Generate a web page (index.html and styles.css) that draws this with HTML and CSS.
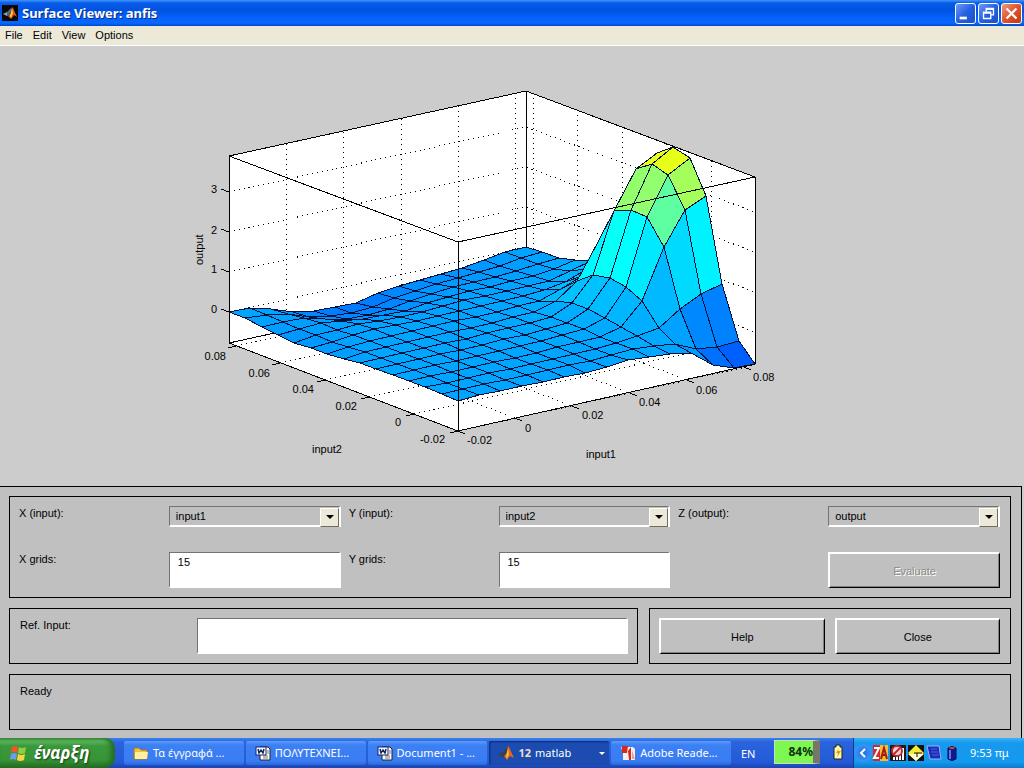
FILE: index.html
```html
<!DOCTYPE html>
<html lang="en">
<head>
  <meta charset="utf-8">
  <title>Surface Viewer: anfis</title>
  <link rel="stylesheet" href="styles.css">
</head>
<body>

  <header class="titlebar">
    <svg class="app-icon" viewBox="0 0 16 16">
      <rect width="16" height="16" fill="#0a0806"/>
      <path d="M1 9l4-2 2 2-2 2z" fill="#7fa8c0"/>
      <path d="M5 7l4-4 1 2-3 5-2 1z" fill="#4a6a86"/>
      <path d="M10 2l1 1 4 9-3-2-3 4-3-3 3-3z" fill="#e2581a"/>
      <path d="M10 3l1 5-2 5-1-2z" fill="#ffc640"/>
    </svg>
    <h1>Surface Viewer: anfis</h1>
    <div class="window-buttons">
      <button aria-label="Minimize"><svg viewBox="0 0 21 21"><path d="M4 14h8v3H4z" fill="#fff"/></svg></button>
      <button aria-label="Restore"><svg viewBox="0 0 21 21"><path d="M8 8V5h8v7h-3M5 9h8v7H5zM5 10h8M8 6h8" fill="none" stroke="#fff" stroke-width="1.5"/></svg></button>
      <button class="close" aria-label="Close window"><svg viewBox="0 0 21 21"><path d="M5 5l11 11M16 5L5 16" stroke="#fff" stroke-width="2.5"/></svg></button>
    </div>
  </header>

  <nav class="menubar">
    <a href="#">File</a>
    <a href="#">Edit</a>
    <a href="#">View</a>
    <a href="#">Options</a>
  </nav>

  <main class="figure">
    <svg id="plot" viewBox="0 46 1024 440" role="img" aria-label="Surface plot of output">
      <polygon points="229,156 526,91 755,177 755,364 458,431 229,343" fill="#fff"/>
      <g id="grid" class="grid-lines"></g>
      <path class="axis" d="M229 156L526 91L755 177V364M526 91V278M229 343L526 278L755 364"/>
      <g id="surface" class="surface"></g>
      <path class="axis" d="M229 156V343L458 431L755 364M229 156L458 242L755 177M458 242V431"/>
      <path id="ticks" class="axis"/>
      <g class="tick-text end">
        <text x="217" y="193">3</text>
        <text x="217" y="234">2</text>
        <text x="217" y="273">1</text>
        <text x="217" y="313">0</text>
        <text x="226" y="360">0.08</text>
        <text x="270" y="377">0.06</text>
        <text x="314" y="393">0.04</text>
        <text x="357" y="410">0.02</text>
        <text x="401" y="426">0</text>
        <text x="445" y="443">-0.02</text>
      </g>
      <g class="tick-text">
        <text x="467" y="444">-0.02</text>
        <text x="525" y="432">0</text>
        <text x="582" y="419">0.02</text>
        <text x="639" y="406">0.04</text>
        <text x="696" y="394">0.06</text>
        <text x="753" y="381">0.08</text>
        <text x="312" y="453">input2</text>
        <text x="586" y="458">input1</text>
        <text transform="translate(203 265) rotate(-90)">output</text>
      </g>
    </svg>
  </main>

  <form class="controls" onsubmit="return false">
    <fieldset class="box inputs">
      <div class="pair">
        <label for="x-input">X (input):</label>
        <span class="dropdown"><select id="x-input"><option>input1</option><option>input2</option></select></span>
      </div>
      <div class="pair">
        <label for="y-input">Y (input):</label>
        <span class="dropdown"><select id="y-input"><option>input2</option><option>input1</option></select></span>
      </div>
      <div class="pair">
        <label for="z-output">Z (output):</label>
        <span class="dropdown"><select id="z-output"><option>output</option></select></span>
      </div>
      <div class="pair">
        <label for="x-grids">X grids:</label>
        <textarea id="x-grids">15</textarea>
      </div>
      <div class="pair">
        <label for="y-grids">Y grids:</label>
        <textarea id="y-grids">15</textarea>
      </div>
      <div class="pair">
        <button class="push last" disabled>Evaluate</button>
      </div>
    </fieldset>
    <div class="row">
      <div class="box ref">
        <label for="ref-input">Ref. Input:</label>
        <input id="ref-input" type="text">
      </div>
      <div class="box actions">
        <button class="push">Help</button>
        <button class="push">Close</button>
      </div>
    </div>
    <div class="box status">Ready</div>
  </form>

  <footer class="taskbar">
    <button class="start">
      <svg viewBox="0 0 18 18">
        <path d="M2 3q3-2 6 0l-1 6q-3-2-6 0z" fill="#f0562a"/>
        <path d="M9 3q3 2 7 0l-1 6q-4 2-7 0z" fill="#8ed03c"/>
        <path d="M1 10q3-2 6 0l-1 6q-3-2-6 0z" fill="#6b9cf5"/>
        <path d="M8 10q3 2 7 0l-1 6q-4 2-7 0z" fill="#fbd33c"/>
      </svg>
      έναρξη
    </button>
    <div class="tasks">
      <button class="task">
        <svg viewBox="0 0 16 16"><path d="M1 3h5l2 2h6v9H1z" fill="#f0c14c" stroke="#a87818"/><path d="M2 7h13l-1 7H2z" fill="#fff0a0"/></svg>
        <span>Τα έγγραφά ...</span>
      </button>
      <button class="task">
        <svg viewBox="0 0 16 16"><path d="M5 2h8l2 2v11H5z" fill="#fff" stroke="#222"/><path d="M8 11h5M8 13h5M12 6h2M12 8h2" stroke="#777"/><rect x="1" y="2" width="10" height="8" fill="#fff" stroke="#14246e"/><path d="M3 4l1 4 2-3 2 3 1-4" fill="none" stroke="#14246e" stroke-width="1.5"/></svg>
        <span>ΠΟΛΥΤΕΧΝΕΙ...</span>
      </button>
      <button class="task">
        <svg viewBox="0 0 16 16"><path d="M5 2h8l2 2v11H5z" fill="#fff" stroke="#222"/><path d="M8 11h5M8 13h5M12 6h2M12 8h2" stroke="#777"/><rect x="1" y="2" width="10" height="8" fill="#fff" stroke="#14246e"/><path d="M3 4l1 4 2-3 2 3 1-4" fill="none" stroke="#14246e" stroke-width="1.5"/></svg>
        <span>Document1 - ...</span>
      </button>
      <button class="task active">
        <svg viewBox="0 0 16 16"><path d="M0 9l5-2 4-5 1 3-3 6-3 1z" fill="#38424e"/><path d="M10 1l1 1 5 11-4-2-3 4-3-4 3-3z" fill="#e2681a"/><path d="M10 3l1 6-2 5-1-3z" fill="#ffb640"/></svg>
        <b>12</b><span>matlab</span><i class="caret"></i>
      </button>
      <button class="task">
        <svg viewBox="0 0 16 16"><path d="M1 2h12l2 2v11H3V8z" fill="#f4f0ee"/><path d="M2 1h6L7 8H2zM8 6l3-4v13H9z" fill="#d8281c"/><path d="M12 5l3 9h-3z" fill="#e8a098"/></svg>
        <span>Adobe Reade...</span>
      </button>
    </div>
    <span class="lang">EN</span>
    <div class="battery"><span>84%</span></div>
    <svg class="power" viewBox="0 0 10 16"><path d="M1 3h2V1h4v2h2v12H1z" fill="#fff4b0" stroke="#222"/><path d="M6 4L3 9h2l-1 4 4-6H5z" fill="#d8a000"/></svg>
    <div class="tray">
      <button class="expand" aria-label="Show hidden icons"><svg viewBox="0 0 16 16"><path d="M10 4L6 8l4 4" fill="none" stroke="#fff" stroke-width="2"/></svg></button>
      <svg class="tray-icons" viewBox="0 0 90 18">
        <rect x="1" y="1" width="7" height="16" fill="#d4282a"/>
        <path d="M2 4h5L2 14h5" fill="none" stroke="#fff" stroke-width="2"/>
        <rect x="8" y="1" width="8" height="16" fill="#f5bc2c"/>
        <path d="M9 15l3-11 3 11M10 11h4" fill="none" stroke="#a01c18" stroke-width="2"/>
        <rect x="18" y="1" width="16" height="16" fill="#221818"/>
        <path d="M22 16v-3M25 16v-5M28 16V8M31 16V4" stroke="#fff" stroke-width="2"/>
        <circle cx="25" cy="7" r="5" fill="#eedada" stroke="#c8242a" stroke-width="2"/>
        <path d="M22 10l6-6" stroke="#c8242a" stroke-width="2"/>
        <rect x="36" y="1" width="16" height="16" fill="#111"/>
        <path d="M44 1l8 8-8 8-8-8z" fill="#f5ec38"/>
        <path d="M36 10h16l-8 7z" fill="#fffbd0"/><path d="M42 9h8M45 9v4" stroke="#111"/>
        <path d="M55 2h12l2 13H58z" fill="#1c2cb8" stroke="#9cb4f4"/>
        <path d="M59 5h6M59 8h7M60 11h7" stroke="#4664e8"/>
        <path d="M76 4q4-3 8 0v11q-4 3-8 0z" fill="#101a8a" stroke="#06104a"/><path d="M78 6v9" stroke="#5878f4" stroke-width="2"/><ellipse cx="80" cy="4" rx="3" ry="1" fill="#d04848"/>
      </svg>
      <time>9:53 πμ</time>
    </div>
  </footer>

  <script src="plot.js"></script>
</body>
</html>
```
FILE: styles.css
```css
* {
  box-sizing: border-box;
}
body {
  margin: 0;
  min-height: 100vh;
  display: flex;
  flex-direction: column;
  background-color: #ccc;
  color: black;
  font-family: "Liberation Sans", sans-serif;
  font-size: 11px;
  line-height: 14px;
}
button, input, select, textarea {
  font: inherit;
  color: inherit;
  border-radius: 0;
  margin: 0;
  outline: none;
}
svg {
  display: block;
}

/* title bar and menu */
.titlebar {
  display: flex;
  align-items: center;
  height: 26px;
  padding: 0 2px;
  background: linear-gradient(#3d95ff 0, #0a5ce8 3px, #0053e1 10px, #0562fa 18px, #0668ff 23px, #0048c8 26px);
}
.app-icon {
  width: 16px;
  height: 16px;
}
.titlebar h1 {
  flex: 1;
  margin: 0 0 0 4px;
  color: white;
  font-family: "Noto Sans", sans-serif;
  font-size: 13px;
  line-height: 16px;
  text-shadow: 1px 1px #0a2a80;
}
.window-buttons {
  display: flex;
  gap: 2px;
}
.window-buttons button {
  width: 21px;
  height: 21px;
  padding: 0;
  border: 1px solid white;
  border-radius: 3px;
  background: linear-gradient(135deg, #6c9cf8, #2560e0 50%, #1c50c8);
}
.window-buttons button.close {
  background: linear-gradient(135deg, #f09a80, #e0522c 50%, #c03810);
}
.menubar {
  display: flex;
  gap: 10px;
  height: 20px;
  padding: 2px 5px;
  background-color: #ece9d8;
  border-bottom: 1px solid white;
}
.menubar a {
  color: black;
  text-decoration: none;
}

/* plot */
.figure {
  flex: 1;
  min-height: 0;
}
#plot {
  width: 100%;
  height: auto;
}
.axis {
  fill: none;
  stroke: black;
  shape-rendering: crispEdges;
}
.grid-lines {
  fill: none;
  stroke: black;
  stroke-dasharray: 1 4;
  shape-rendering: crispEdges;
}
.surface {
  stroke: #001038;
  stroke-width: 1;
  stroke-linejoin: round;
  shape-rendering: crispEdges;
}
.tick-text {
  font-size: 11px;
}
.end {
  text-anchor: end;
}

/* control panel */
.controls {
  margin-right: 2px;
  padding: 9px 10px 8px 9px;
  display: flex;
  flex-direction: column;
  gap: 10px;
  background-color: #c0c0c0;
  border: 1px solid black;
  border-width: 1px 1px 0 0;
}
.box {
  margin: 0;
  padding: 9px;
  border: 1px solid black;
}
.inputs {
  display: grid;
  grid-template-columns: repeat(3, 1fr);
  gap: 25px 8px;
  padding-right: 10px;
}
.pair {
  display: grid;
  grid-template-columns: 150fr 172fr;
  align-items: start;
}
.dropdown {
  position: relative;
  height: 21px;
}
.dropdown select {
  appearance: none;
  display: block;
  width: 100%;
  height: 21px;
  padding: 0 20px 0 6px;
  background-color: #c0c0c0;
}
.dropdown::before {
  content: "";
  position: absolute;
  top: 2px;
  right: 2px;
  width: 17px;
  height: 17px;
  background-color: #ece9d8;
  border: 1px solid;
  border-color: white #6e6c60 #6e6c60 white;
  pointer-events: none;
}
.dropdown::after {
  content: "";
  position: absolute;
  top: 9px;
  right: 7px;
  border: 4px solid transparent;
  border-top-color: black;
  border-bottom: 0;
  pointer-events: none;
}
select, textarea, .ref input {
  border: 1px solid;
  border-width: 1px 2px 2px 1px;
  border-color: #76746a white white #76746a;
}
.pair textarea {
  display: block;
  width: 100%;
  height: 36px;
  padding: 2px 8px;
  background-color: white;
  resize: none;
  overflow: hidden;
}
.push {
  height: 36px;
  padding: 0;
  background-color: #c0c0c0;
  border: 1px solid;
  border-width: 2px 1px 1px 2px;
  border-color: white black black white;
  box-shadow: inset -1px -1px #808080;
}
.push:disabled {
  color: #8c8c8c;
  text-shadow: 1px 1px white;
}
.push.last {
  grid-column: 2;
}
.row {
  display: grid;
  grid-template-columns: 629fr 362fr;
  gap: 11px;
}
.ref {
  display: grid;
  grid-template-columns: 177fr 432fr;
  align-items: start;
  padding-left: 10px;
}
.ref input {
  width: 100%;
  height: 36px;
  background-color: white;
}
.actions {
  display: grid;
  grid-template-columns: 1fr 1fr;
  gap: 10px;
  padding-right: 10px;
}
.status {
  height: 56px;
  padding-left: 10px;
}

/* taskbar */
.taskbar {
  display: flex;
  height: 30px;
  color: white;
  font-family: "Noto Sans", sans-serif;
  background: linear-gradient(#3a80f0 0, #2a64dc 4px, #245ad8 24px, #1a44b0 30px);
}
.start {
  width: 115px;
  padding: 0 0 0 10px;
  display: flex;
  align-items: center;
  gap: 6px;
  border: 0;
  border-radius: 0 10px 10px 0;
  background: linear-gradient(#4a944a 0, #5cb85c 3px, #3c983c 8px, #369436 22px, #246c24 30px);
  box-shadow: inset -4px 0 5px #246c24;
  font-size: 17px;
  font-weight: bold;
  font-style: italic;
  line-height: 24px;
  text-shadow: 1px 1px 2px #123c12;
}
.start svg {
  width: 18px;
  height: 18px;
}
.tasks {
  flex: 1;
  display: flex;
  gap: 2px;
  padding: 3px 0 3px 9px;
}
.task {
  flex: 1 1 0;
  min-width: 0;
  display: flex;
  align-items: center;
  gap: 4px;
  padding: 0 4px 0 9px;
  border: 0;
  border-radius: 2px;
  background: linear-gradient(#5c9cfc 0, #3c80f4 4px, #3a7cf2 20px, #2c68dc);
  font-size: 11px;
  white-space: nowrap;
}
.task svg {
  flex: none;
  width: 16px;
  height: 16px;
}
.task.active {
  background: #1c4cb0;
  box-shadow: inset 1px 1px 2px #0c2c74;
}
.task b {
  color: #f0dcc8;
}
.caret {
  margin-left: auto;
  border: 3px solid transparent;
  border-top-color: white;
  border-bottom: 0;
}
.lang {
  padding: 9px 0 0 10px;
  width: 43px;
}
.battery {
  width: 46px;
  height: 24px;
  margin-top: 2px;
  border: 1px solid #d8d8c0;
  border-right: 7px solid #77756c;
  background-color: #7cf850;
  color: #123012;
  font-size: 12px;
  font-weight: bold;
  line-height: 22px;
  text-align: right;
}
.power {
  width: 10px;
  height: 16px;
  margin: 6px 10px 0 13px;
}
.tray {
  display: flex;
  align-items: center;
  width: 171px;
  background: linear-gradient(#35b4f8 0, #1898ee 5px, #129aee 24px, #0f78cc 30px);
  border-left: 1px solid #0c3c90;
}
.expand {
  width: 18px;
  height: 18px;
  padding: 1px;
  border: 0;
  border-radius: 50%;
  background: radial-gradient(#1c70e8, #4aa4f8);
}
.tray-icons {
  width: 90px;
  height: 18px;
}
.tray time {
  margin-left: 8px;
}
```
FILE: plot.js
```javascript
// height of every grid vertex above the floor of the axes box, in px
// one row for each input1 step, one value for each input2 step
var heights = [
  [30, 31, 31, 31, 31, 31, 30, 28, 27, 26, 25, 27, 29, 31, 31],
  [31, 31, 31, 31, 31, 31, 31, 30, 29, 28, 28, 28, 29, 30, 30],
  [31, 31, 31, 31, 31, 31, 31, 31, 30, 30, 29, 29, 28, 26, 25],
  [31, 31, 31, 31, 31, 31, 31, 31, 31, 31, 30, 27, 22, 18, 17],
  [30, 31, 31, 31, 31, 31, 31, 31, 31, 31, 28, 24, 18, 14, 13],
  [30, 31, 31, 31, 31, 31, 31, 31, 31, 30, 28, 23, 17, 13, 12],
  [30, 31, 31, 31, 32, 32, 32, 31, 31, 30, 28, 23, 18, 14, 12],
  [31, 31, 31, 32, 32, 32, 32, 31, 31, 30, 29, 26, 22, 18, 17],
  [33, 32, 32, 32, 33, 33, 33, 32, 31, 31, 30, 27, 24, 21, 19],
  [32, 33, 33, 33, 34, 34, 34, 33, 32, 31, 30, 28, 26, 23, 21],
  [30, 32, 35, 38, 41, 43, 43, 39, 33, 31, 30, 28, 26, 24, 22],
  [26, 29, 39, 59, 67, 70, 66, 54, 40, 33, 30, 29, 27, 25, 23],
  [9, 19, 53, 109, 132, 133, 126, 88, 48, 36, 31, 29, 28, 27, 26],
  [2, 16, 63, 141, 170, 174, 163, 121, 76, 44, 36, 32, 30, 30, 30],
  [1, 18, 68, 150, 182, 187, 174, 140, 100, 62, 41, 36, 32, 31, 30]
];
var last = 14;
var svgNS = "http://www.w3.org/2000/svg";

function project(i, j, h) {
  var x = 458 + (297 * i - 229 * j) / last;
  var y = 431 - (66 * i + 88 * j) / last - h;
  return Math.round(x) + "," + Math.round(y);
}

function faceColor(h) {
  if(h < 67) {
    return "rgb(0," + Math.round(91 + h * 2.4) + ",255)";
  }
  var r = Math.min(235, Math.round((h - 67) * 2.23));
  return "rgb(" + r + ",255," + (255 - r) + ")";
}

function add(parent, name, attrs) {
  var el = document.createElementNS(svgNS, name);
  for(var key in attrs) {
    el.setAttribute(key, attrs[key]);
  }
  document.querySelector(parent).appendChild(el);
}

// far faces first, so the near ones cover them
for(var i = last - 1; i >= 0; i--) {
  for(var j = last - 1; j >= 0; j--) {
    add("#surface", "polygon", {
      points: [
        project(i, j, heights[i][j]),
        project(i + 1, j, heights[i + 1][j]),
        project(i + 1, j + 1, heights[i + 1][j + 1]),
        project(i, j + 1, heights[i][j + 1])
      ].join(" "),
      fill: faceColor(heights[i][j])
    });
  }
}

var ticks = "";
for(var k = 0; k <= 5; k++) {
  var dx = Math.round(57.2 * k), dy = Math.round(12.7 * k);
  var ex = Math.round(44.4 * k), ey = Math.round(17 * k);

  // floor lines, then the walls above them
  add("#grid", "path", {d: "M" + (458 + dx) + " " + (431 - dy) + "l-229 -88v-187"});
  add("#grid", "path", {d: "M" + (458 - ex) + " " + (431 - ey) + "l297 -66v-187"});
  ticks += "M" + (458 + dx) + " " + (431 - dy) + "l7 3";
  ticks += "M" + (458 - ex) + " " + (431 - ey) + "l-8 2";
}
for(var z = 0; z <= 3; z++) {
  var zy = 312 - 40 * z;
  add("#grid", "path", {d: "M229 " + zy + "l297 -65l229 85"});
  ticks += "M229 " + zy + "l-8 -3";
}
document.querySelector("#ticks").setAttribute("d", ticks);
```
